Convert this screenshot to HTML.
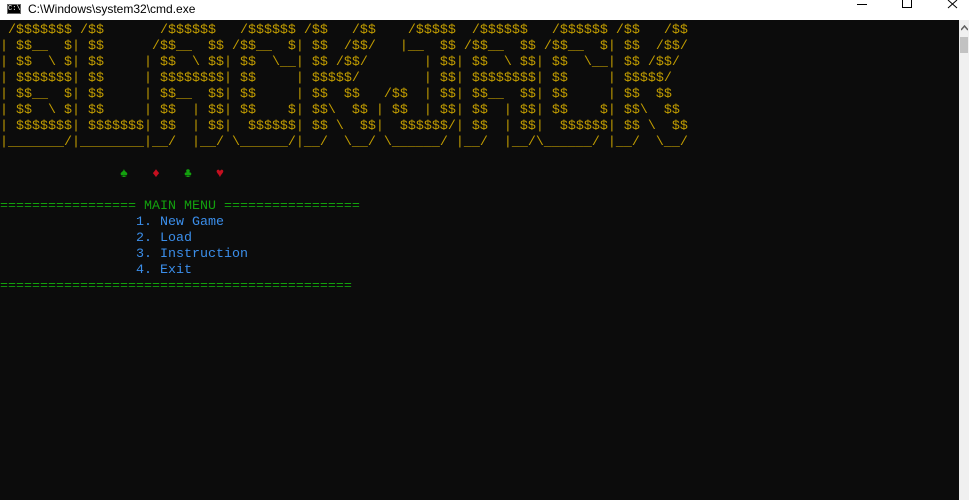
<!DOCTYPE html>
<html><head><meta charset="utf-8"><style>
html,body{margin:0;padding:0;width:969px;height:500px;overflow:hidden;background:#0c0c0c}
#title{position:absolute;left:0;top:0;width:969px;height:20px;background:#fff;font:12px "Liberation Sans",sans-serif;color:#000}
#title .t{position:absolute;left:28px;top:2px}
#icon{position:absolute;left:7px;top:4px;width:14px;height:10px;background:#000;border:1px solid #666;box-sizing:border-box;color:#fff;font:7px "Liberation Mono",monospace;line-height:8px;text-align:center}
.ctl{position:absolute;top:0}
#sb{position:absolute;left:959px;top:20px;width:10px;height:480px;background:#f0f0f0}
#thumb{position:absolute;left:960px;top:37px;width:8px;height:16px;background:#c2c2c2}
pre{position:absolute;left:0;top:23px;margin:0;font-family:"Liberation Mono",monospace;font-size:13.33px;line-height:16px;letter-spacing:0;color:#c19c00;white-space:pre}
.g{color:#13a10e}.r{color:#c50f1f}.b{color:#3b8eea}
</style></head><body>
<div id="title"><div id="icon">C:\</div><span class="t">C:\Windows\system32\cmd.exe</span>
<svg class="ctl" width="969" height="20" style="left:0">
<line x1="857" y1="4.5" x2="867" y2="4.5" stroke="#000" stroke-width="1"/>
<rect x="902.5" y="-1.5" width="9" height="9" fill="none" stroke="#000"/>
<line x1="948" y1="0" x2="957" y2="8" stroke="#000"/><line x1="957" y1="0" x2="948" y2="8" stroke="#000"/>
</svg></div>
<div id="sb"></div><div id="thumb"></div>
<svg style="position:absolute;left:961px;top:25px" width="7" height="6"><path d="M0 5 L3.5 1 L7 5" fill="none" stroke="#606060" stroke-width="1.5"/></svg>
<pre> /$$$$$$$ /$$       /$$$$$$   /$$$$$$ /$$   /$$    /$$$$$  /$$$$$$   /$$$$$$ /$$   /$$
| $$__  $| $$      /$$__  $$ /$$__  $| $$  /$$/   |__  $$ /$$__  $$ /$$__  $| $$  /$$/
| $$  \ $| $$     | $$  \ $$| $$  \__| $$ /$$/       | $$| $$  \ $$| $$  \__| $$ /$$/
| $$$$$$$| $$     | $$$$$$$$| $$     | $$$$$/        | $$| $$$$$$$$| $$     | $$$$$/
| $$__  $| $$     | $$__  $$| $$     | $$  $$   /$$  | $$| $$__  $$| $$     | $$  $$
| $$  \ $| $$     | $$  | $$| $$    $| $$\  $$ | $$  | $$| $$  | $$| $$    $| $$\  $$
| $$$$$$$| $$$$$$$| $$  | $$|  $$$$$$| $$ \  $$|  $$$$$$/| $$  | $$|  $$$$$$| $$ \  $$
|_______/|________|__/  |__/ \______/|__/  \__/ \______/ |__/  |__/\______/ |__/  \__/

               <span class="g">♠</span>   <span class="r">♦</span>   <span class="g">♣</span>   <span class="r">♥</span>

<span class="g">================= MAIN MENU =================</span>
<span class="b">                 1. New Game
                 2. Load
                 3. Instruction
                 4. Exit</span>
<span class="g">============================================</span></pre>
</body></html>
